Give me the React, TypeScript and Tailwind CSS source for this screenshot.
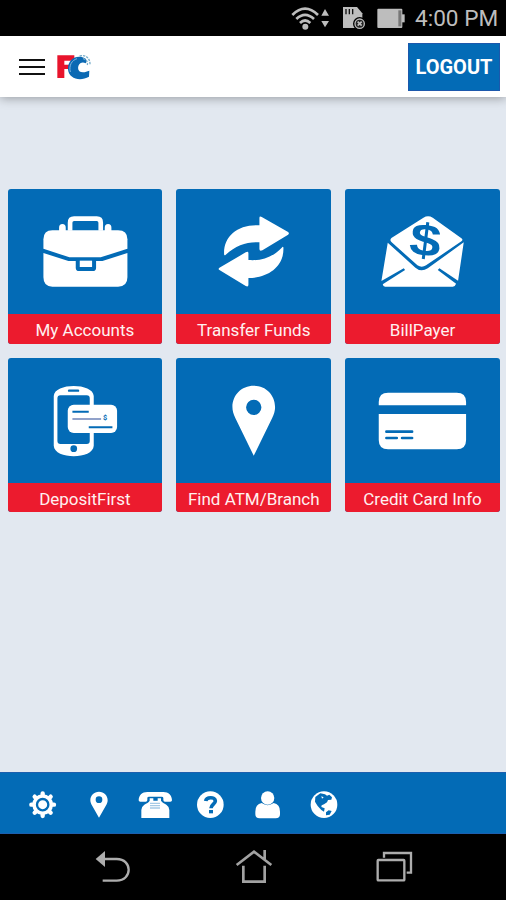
import type { ReactNode } from "react";

const BLUE = "#036bb6";

function StatusBar() {
  return (
    <div className="h-[36px] shrink-0 bg-black flex items-center justify-end pr-[8px]">
      <svg width="115" height="36" viewBox="30 0 345 108" fill="#bdbdbd">
        <g fill="none" stroke="#bdbdbd" strokeWidth="8">
          <path d="M37 45Q75 7 114 45" />
          <path d="M49 57Q75 32 102 57" />
          <path d="M60 69Q75 54 91 69" />
        </g>
        <circle cx="76" cy="80" r="9" />
        <path d="M124 47L135 27L147 47ZM124 63H147L135 82Z" />
        <path d="M189 21H231L247 40V84H189Z" />
        <path d="M198 27V43M208 27V43M218 27V43" stroke="#111" strokeWidth="4" />
        <circle cx="239" cy="71" r="18" stroke="#000" strokeWidth="4" />
        <circle cx="239" cy="71" r="12" fill="#222" />
        <path d="M233 65L245 77M245 65L233 77" stroke="#bdbdbd" strokeWidth="5" />
        <rect x="292" y="26" width="75" height="58" rx="3" />
        <path d="M366 43H374V67H366Z" />
        <path d="M355 31H364V79H355Z" fill="#777" />
      </svg>
      <span className="ml-[10px] w-[83px] whitespace-nowrap text-[22.6px] leading-[37px] text-[#bdbdbd]">4:00 PM</span>
    </div>
  );
}

function Logo() {
  return (
    <svg width="36" height="26" viewBox="169 70 108 78">
      <path d="M173 74H224V90H194V102H218V115H194V142H173Z" fill="#e8142c" />
      <path
        d="M268 138C242 153 207 145 205 116C204 90 223 75 246 79C260 82 264 90 258 98C250 93 240 96 237 104C232 116 238 125 250 125C257 125 262 121 269 120Z"
        fill="#0b69b3"
      />
      <path d="M212 124C207 103 217 89 232 84" fill="none" stroke="#7fb6df" strokeWidth="3" />
      <path d="M240 76C258 71 272 83 271 103M250 84C260 86 265 94 263 103" fill="none" stroke="#78aecb" strokeWidth="4" strokeDasharray="7 3" />
    </svg>
  );
}

function Header() {
  return (
    <header className="relative z-10 h-[61px] shrink-0 bg-white flex items-center justify-between pl-[19px] pr-[6px] shadow-[0_1px_10px_rgba(0,0,0,0.35)]">
      <div className="flex items-center gap-[11px]">
        <div className="flex flex-col gap-[5px]">
          <span className="h-[2px] w-[26px] bg-[#111]" />
          <span className="h-[2px] w-[26px] bg-[#111]" />
          <span className="h-[2px] w-[26px] bg-[#111]" />
        </div>
        <Logo />
      </div>
      <button className="h-[48px] w-[92px] border border-[#1c58ac] bg-[#036bb6] pt-[1px] text-[20px] font-bold text-white">
        LOGOUT
      </button>
    </header>
  );
}

const tiles: { label: string; viewBox: string; icon: ReactNode }[] = [
  {
    label: "My Accounts",
    viewBox: "23 27 464 375",
    icon: (
      <>
        <path d="M209 152V128Q209 116 221 116H289Q301 116 301 128V152" fill="none" stroke="white" strokeWidth="14" />
        <path d="M176 154V143Q176 132 186 132Q196 132 196 143V154ZM313 154V143Q313 132 323 132Q333 132 333 143V154Z" />
        <path d="M129 178Q129 151 156 151H353Q381 151 381 178V206L301 232H207L129 206Z" />
        <path d="M129 219L204 243H226V263Q226 273 236 273H277Q287 273 287 263V243H306L381 219V292Q381 320 353 320H156Q129 320 129 292Z" />
        <path d="M228 236H285V262Q285 271 276 271H237Q228 271 228 262Z" fill={BLUE} />
        <path d="M238 242H275V261H238Z" />
      </>
    ),
  },
  {
    label: "Transfer Funds",
    viewBox: "24 27 464 375",
    icon: (
      <>
        <path d="M274 114Q274 107 281 111L360 156Q365 160 360 164L283 211Q274 215 274 207V187C238 184 204 196 173 224Q168 228 168 222C166 169 210 132 274 136Z" />
        <path d="M241 220Q241 213 233 217L154 263Q149 267 154 270L233 318Q241 322 241 314V294C301 294 348 259 346 204Q346 197 341 203C313 232 282 243 241 240Z" />
      </>
    ),
  },
  {
    label: "BillPayer",
    viewBox: "27 27 464 375",
    icon: (
      <>
        <path d="M166 174L262 113Q276 105 290 113L376 175Q382 179 376 184L270 256Q257 264 244 256L166 186Q160 180 166 174Z" />
        <path d="M155 188L238 263Q255 278 275 265L383 187L366 302L310 265L305 270L360 311Q357 320 350 320H147Q141 320 140 313L207 270L203 265L136 303Z" />
        <text
          x="268"
          y="227"
          textAnchor="middle"
          transform="rotate(7 268 182)"
          fontFamily="Liberation Sans, Arial, sans-serif"
          fontWeight="bold"
          fontSize="136"
          textLength="94"
          lengthAdjust="spacingAndGlyphs"
          fill={BLUE}
        >
          $
        </text>
      </>
    ),
  },
  {
    label: "DepositFirst",
    viewBox: "23 22 464 375",
    icon: (
      <>
        <path
          fillRule="evenodd"
          d="M160 136C162 96 278 96 280 136V285C278 327 162 327 160 285ZM171 143V271Q171 280 180 280H259Q268 280 268 271V143Q268 134 259 134H180Q171 134 171 143Z"
        />
        <path d="M206 120H233" stroke={BLUE} strokeWidth="7" strokeLinecap="round" />
        <circle cx="220" cy="294" r="10" fill={BLUE} />
        <rect x="202" y="162" width="148" height="85" rx="18" />
        <path d="M216 183H265M265 230H336" stroke={BLUE} strokeWidth="6" />
        <path d="M216 205H302" stroke="#6c83b8" strokeWidth="5" />
        <text x="314" y="207" textAnchor="middle" fontSize="22" fontWeight="bold" fill={BLUE}>$</text>
      </>
    ),
  },
  {
    label: "Find ATM/Branch",
    viewBox: "24 22 464 375",
    icon: (
      <path
        fillRule="evenodd"
        d="M257 105C220 105 193 133 193 169C193 181 196 190 202 203L257 315L312 203C318 190 321 181 321 169C321 133 294 105 257 105ZM257 147A23 23 0 1 1 257 193A23 23 0 1 1 257 147Z"
      />
    ),
  },
  {
    label: "Credit Card Info",
    viewBox: "27 22 464 375",
    icon: (
      <>
        <path d="M128 164V154Q128 126 156 126H362Q390 126 390 154V164Z" />
        <path d="M128 190H390V268Q390 296 362 296H156Q128 296 128 268Z" />
        <path d="M151 243H228M151 262H182M198 262H228" stroke={BLUE} strokeWidth="8" strokeLinecap="round" />
      </>
    ),
  },
];

function Tile({ label, viewBox, icon }: { label: string; viewBox: string; icon: ReactNode }) {
  return (
    <div className="flex h-[154.5px] flex-col overflow-hidden rounded-[3px] bg-[#036bb6]">
      <svg className="block h-[125px] w-full shrink-0" viewBox={viewBox} fill="white">
        {icon}
      </svg>
      <div className="h-[30px] shrink-0 bg-[#ec1b2e] text-center text-[17px] leading-[32px] text-[#fff0f0] whitespace-nowrap">
        {label}
      </div>
    </div>
  );
}

function Toolbar() {
  return (
    <div className="h-[62px] shrink-0 border-y border-[#1c5fae] bg-[#036bb6] flex items-center pl-[27px] pt-[3px] text-white">
      {/* settings */}
      <svg width="32" height="30" viewBox="81 74 96 90" fill="white">
        <g stroke="white" strokeWidth="13" strokeLinecap="round">
          <path d="M128 84V152M94 118H162M104 94L152 142M152 94L104 142" />
        </g>
        <circle cx="128" cy="118" r="31" />
        <circle cx="128" cy="118" r="17" fill="none" stroke={BLUE} strokeWidth="7" />
      </svg>
      {/* locations */}
      <svg className="ml-[30px]" width="20" height="30" viewBox="267 74 60 90" fill="white">
        <path
          fillRule="evenodd"
          d="M297 79C282 79 271 90 271 105Q271 112 274 117L297 157L320 117Q323 112 323 105C323 90 312 79 297 79ZM297 93A10 10 0 1 1 297 113A10 10 0 1 1 297 93Z"
        />
      </svg>
      {/* call */}
      <svg className="ml-[29px]" width="36" height="30" viewBox="414 74 108 90" fill="white">
        <path d="M416 105C416 90 426 80 442 80H490C506 80 516 90 516 105Q516 109 511 109H495Q490 109 490 104V98Q490 94 485 94H447Q442 94 442 98V104Q442 109 437 109H421Q416 109 416 105Z" />
        <path d="M449 99H460V106H473V99H483V106C487 112 492 114 499 118Q508 124 508 134V158H424V134Q424 124 433 118C440 114 446 112 449 106Z" />
        <path d="M451 114H481M451 121H481M451 128H481" stroke="#79afd8" strokeWidth="4" strokeDasharray="4 2" />
      </svg>
      {/* help */}
      <svg className="ml-[21px]" width="32" height="30" viewBox="48 74 96 90" fill="white">
        <circle cx="94" cy="118" r="40" />
        <path d="M80 107C82 94 109 94 109 107C109 116 96 117 96 129" fill="none" stroke={BLUE} strokeWidth="11" />
        <path d="M90 134H102V144H90Z" fill={BLUE} />
      </svg>
      {/* profile */}
      <svg className="ml-[26px]" width="30" height="30" viewBox="219 74 90 90" fill="white">
        <circle cx="263" cy="98" r="20" />
        <path d="M245 113Q263 126 281 113Q300 116 300 139V147Q300 159 287 159H239Q226 159 226 147V139Q226 116 245 113Z" />
      </svg>
      {/* language */}
      <svg className="ml-[25px]" width="32" height="30" viewBox="384 74 96 90" fill="white">
        <circle cx="432" cy="118" r="40" />
        <path
          d="M406 95L421 84L435 87L441 91L448 88L456 96L454 103L444 104L441 111L432 117L425 120L424 125L434 129L432 139L424 134L413 122L405 109ZM438 141L446 135L455 137L449 148L438 150Z"
          fill={BLUE}
        />
        <path d="M424 93L431 96L426 100Z" />
      </svg>
    </div>
  );
}

function NavBar() {
  return (
    <div className="flex-1 bg-black flex items-start justify-between pl-[94px] pr-[91px] pt-[15px]">
      <svg width="38" height="36" viewBox="282 252 114 108" fill="none" stroke="#adadad" strokeWidth="7">
        <path d="M312 282H350C398 282 398 347 350 347H308" />
        <path d="M287 282L315 258V306Z" fill="#adadad" stroke="none" />
      </svg>
      <svg width="38" height="36" viewBox="164 252 114 108" fill="none" stroke="#a2a2a2" strokeWidth="8">
        <path d="M169 300L221 260L273 300M189 302V350H253V302M253 255V284" />
      </svg>
      <svg width="40" height="36" viewBox="106 252 120 108" fill="none" stroke="#adadad" strokeWidth="7">
        <rect x="114" y="285" width="80" height="61" rx="2" />
        <path d="M133 278V264H214V323H201" />
      </svg>
    </div>
  );
}

export default function App() {
  return (
    <div className="flex h-[900px] w-[506px] flex-col overflow-hidden bg-[#e2e8f0] font-[Roboto,sans-serif]">
      <StatusBar />
      <Header />
      <main className="flex-1 pt-[92px] pl-[7.5px] pr-[6px]">
        <div className="grid grid-cols-3 gap-[14px]">
          {tiles.map((tile) => (
            <Tile key={tile.label} {...tile} />
          ))}
        </div>
      </main>
      <div className="flex h-[128px] shrink-0 flex-col">
        <Toolbar />
        <NavBar />
      </div>
    </div>
  );
}
